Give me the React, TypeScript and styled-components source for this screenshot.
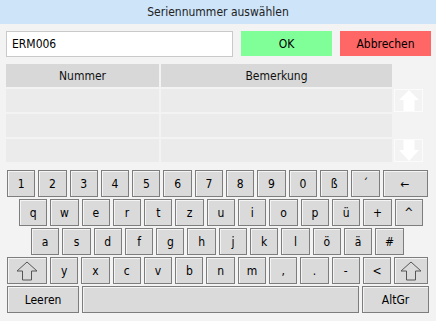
import React, { useState } from 'react';
import styled, { createGlobalStyle } from 'styled-components';

const GlobalStyle = createGlobalStyle`
  html, body {
    margin: 0;
    padding: 0;
    background: #f3f3f3;
  }
  * {
    box-sizing: border-box;
  }
`;

const Page = styled.div`
  width: 436px;
  height: 321px;
  background: #f3f3f3;
  font-family: "DejaVu Sans Condensed", "DejaVu Sans", sans-serif;
  font-size: 12px;
  color: #000;
  overflow: hidden;
`;

const TitleBar = styled.div`
  height: 24px;
  background: #cde4f9;
  display: flex;
  align-items: center;
  justify-content: center;
  color: #222;
`;

const TopRow = styled.div`
  display: flex;
  align-items: flex-start;
  padding: 7px 0 0 6px;
  height: 40px;
`;

const SearchInput = styled.input`
  width: 227px;
  height: 26px;
  border: 1px solid #c9c9c9;
  background: #fff;
  padding: 0 0 0 5px;
  font: inherit;
  color: #000;
  outline: none;
`;

const ActionButton = styled.button<{ tone: 'ok' | 'cancel' }>`
  width: 91px;
  height: 25px;
  margin-left: 8px;
  border: none;
  background: ${p => (p.tone === 'ok' ? '#80ff99' : '#ff6666')};
  font: inherit;
  color: #000;
  padding: 0;
`;

const TableArea = styled.div`
  display: grid;
  grid-template-columns: 153px 231px 29px;
  grid-auto-rows: 23px;
  column-gap: 2px;
  row-gap: 2px;
  padding-left: 6px;
`;

const HeaderCell = styled.div`
  background: #d8d8d8;
  display: flex;
  align-items: center;
  justify-content: center;
  color: #111;
`;

const Cell = styled.div`
  background: #ebebeb;
`;

const Blank = styled.div``;

const ScrollButton = styled.div`
  border: 1px solid #fbfbfb;
  display: flex;
  align-items: center;
  justify-content: center;
`;

const Keyboard = styled.div`
  display: flex;
  flex-direction: column;
  gap: 2px;
  margin-top: 8px;
`;

const KeyRow = styled.div<{ indent: number }>`
  display: flex;
  gap: 3px;
  padding-left: ${p => p.indent}px;
  height: 27px;
`;

const Key = styled.button<{ w?: number }>`
  width: ${p => p.w ?? 28.3}px;
  flex: none;
  height: 27px;
  background: #dadada;
  border: 1px solid #7d7d7d;
  box-shadow: inset 1px 1px 0 #f4f4f4;
  font: inherit;
  color: #000;
  padding: 0;
  display: flex;
  align-items: center;
  justify-content: center;
`;

const ArrowUp = () => (
  <svg width="20" height="21" viewBox="0 0 20 21">
    <path d="M10 0 L20 10 L15.5 10 L15.5 21 L4.5 21 L4.5 10 L0 10 Z" fill="#fff" />
  </svg>
);

const ArrowDown = () => (
  <svg width="20" height="21" viewBox="0 0 20 21">
    <path d="M4.5 0 L15.5 0 L15.5 10 L20 10 L10 21 L0 10 L4.5 10 Z" fill="#fff" />
  </svg>
);

const ShiftIcon = () => (
  <svg width="24" height="22" viewBox="0 0 24 22">
    <path d="M12 2 L22 11 L16.5 11 L16.5 20 L7.5 20 L7.5 11 L2 11 Z" fill="none" stroke="#555" strokeWidth="1" />
  </svg>
);

const row1 = ['1', '2', '3', '4', '5', '6', '7', '8', '9', '0', 'ß', '´'];
const row2 = ['q', 'w', 'e', 'r', 't', 'z', 'u', 'i', 'o', 'p', 'ü', '+', '^'];
const row3 = ['a', 's', 'd', 'f', 'g', 'h', 'j', 'k', 'l', 'ö', 'ä', '#'];
const row4 = ['y', 'x', 'c', 'v', 'b', 'n', 'm', ',', '.', '-', '<'];

const App: React.FC = () => {
  const [value, setValue] = useState('ERM006');
  const rows = [0, 1, 2];

  return (
    <Page>
      <GlobalStyle />
      <TitleBar>Seriennummer auswählen</TitleBar>
      <TopRow>
        <SearchInput value={value} onChange={e => setValue(e.target.value)} />
        <ActionButton tone="ok">OK</ActionButton>
        <ActionButton tone="cancel">Abbrechen</ActionButton>
      </TopRow>

      <TableArea>
        <HeaderCell>Nummer</HeaderCell>
        <HeaderCell>Bemerkung</HeaderCell>
        <Blank />
        {rows.map(i => (
          <React.Fragment key={i}>
            <Cell />
            <Cell />
            {i === 0 && <ScrollButton><ArrowUp /></ScrollButton>}
            {i === 1 && <Blank />}
            {i === 2 && <ScrollButton><ArrowDown /></ScrollButton>}
          </React.Fragment>
        ))}
      </TableArea>

      <Keyboard>
        <KeyRow indent={7}>
          {row1.map(k => <Key key={k}>{k}</Key>)}
          <Key w={45}>←</Key>
        </KeyRow>
        <KeyRow indent={19}>
          {row2.map(k => <Key key={k}>{k}</Key>)}
        </KeyRow>
        <KeyRow indent={31}>
          {row3.map(k => <Key key={k}>{k}</Key>)}
        </KeyRow>
        <KeyRow indent={7}>
          <Key w={40}><ShiftIcon /></Key>
          {row4.map(k => <Key key={k}>{k}</Key>)}
          <Key w={34}><ShiftIcon /></Key>
        </KeyRow>
        <KeyRow indent={7}>
          <Key w={72}>Leeren</Key>
          <Key w={277} />
          <Key w={67}>AltGr</Key>
        </KeyRow>
      </Keyboard>
    </Page>
  );
};

export default App;
